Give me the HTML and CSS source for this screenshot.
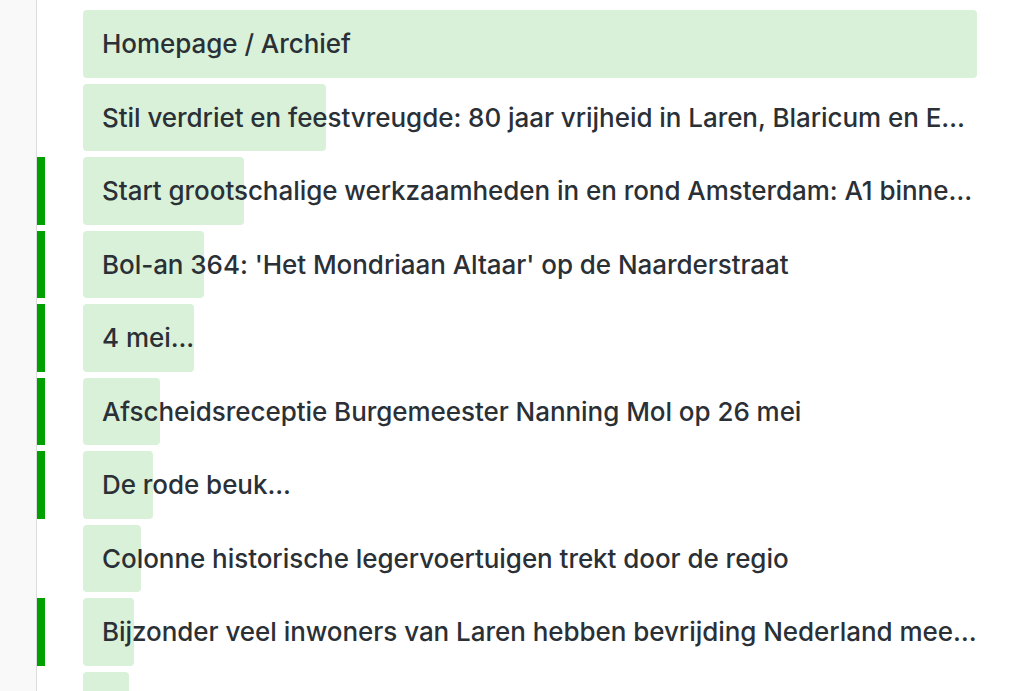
FILE: index.html
```html
<!DOCTYPE html>
<html lang="nl">
<head>
<meta charset="utf-8">
<title>Archief</title>
<link rel="stylesheet" href="styles.css">
</head>
<body>
<div class="page">
  <div class="gutter"></div>
  <ul class="list">
    <li class="row"><span class="mark"></span><div class="item"><span class="fill" style="width:100%"></span><span class="label">Homepage / Archief</span></div></li>
    <li class="row"><span class="mark"></span><div class="item"><span class="fill" style="width:243px"></span><span class="label">Stil verdriet en feestvreugde: 80 jaar vrijheid in Laren, Blaricum en Eemnes herdacht en gevierd</span></div></li>
    <li class="row"><span class="mark on"></span><div class="item"><span class="fill" style="width:161px"></span><span class="label">Start grootschalige werkzaamheden in en rond Amsterdam: A1 binnenkort afgesloten</span></div></li>
    <li class="row"><span class="mark on"></span><div class="item"><span class="fill" style="width:121px"></span><span class="label">Bol-an 364: 'Het Mondriaan Altaar' op de Naarderstraat</span></div></li>
    <li class="row"><span class="mark on"></span><div class="item"><span class="fill" style="width:111px"></span><span class="label">4 mei...</span></div></li>
    <li class="row"><span class="mark on"></span><div class="item"><span class="fill" style="width:77px"></span><span class="label">Afscheidsreceptie Burgemeester Nanning Mol op 26 mei</span></div></li>
    <li class="row"><span class="mark on"></span><div class="item"><span class="fill" style="width:70px"></span><span class="label">De rode beuk...</span></div></li>
    <li class="row"><span class="mark"></span><div class="item"><span class="fill" style="width:58px"></span><span class="label">Colonne historische legervoertuigen trekt door de regio</span></div></li>
    <li class="row"><span class="mark on"></span><div class="item"><span class="fill" style="width:51px"></span><span class="label">Bijzonder veel inwoners van Laren hebben bevrijding Nederland meegemaakt</span></div></li>
    <li class="row"><span class="mark"></span><div class="item"><span class="fill" style="width:46px"></span><span class="label">Laren</span></div></li>
  </ul>
</div>
</body>
</html>
```
FILE: styles.css
```css
html, body {
  margin: 0;
  padding: 0;
  background: #ffffff;
  height: 100%;
  overflow: hidden;
}
body {
  font-family: Inter, "Noto Sans", sans-serif;
  color: #2a3036;
}
.page {
  display: flex;
  min-height: 100%;
}
.gutter {
  width: 36px;
  flex: none;
  background: #f9f9f9;
  border-right: 1px solid #dcdcdc;
}
.list {
  flex: 1;
  list-style: none;
  margin: 0;
  padding: 10px 47px 0 0;
  display: flex;
  flex-direction: column;
  gap: 6px;
  min-width: 0;
}
.row {
  display: flex;
  height: 67.5px;
  flex: none;
}
.mark {
  width: 8px;
  flex: none;
  margin-right: 38px;
}
.mark.on {
  background: #00a000;
}
.item {
  position: relative;
  flex: 1;
  min-width: 0;
  display: flex;
  align-items: center;
}
.fill {
  position: absolute;
  left: 0;
  top: 0;
  bottom: 0;
  background: #daf1d9;
  border-radius: 4px;
}
.label {
  position: relative;
  padding-left: 19px;
  font-size: 26px;
  font-weight: 500;
  letter-spacing: -0.05px;
  white-space: nowrap;
  overflow: hidden;
  text-overflow: ellipsis;
  min-width: 0;
}
```
